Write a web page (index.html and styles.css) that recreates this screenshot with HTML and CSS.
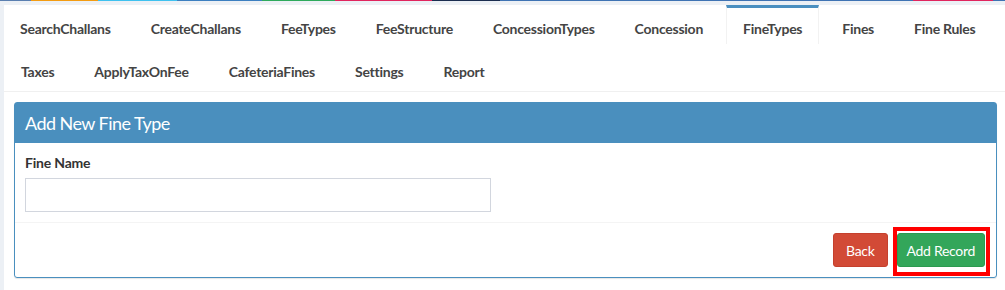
FILE: index.html
```html
<!DOCTYPE html>
<html lang="en">
<head>
  <meta charset="UTF-8">
  <title>Fine Types</title>
  <link rel="stylesheet" href="styles.css">
</head>
<body>
  <div class="color-strip">
    <span class="c1"></span><span class="c2"></span><span class="c3"></span><span class="c4"></span>
    <span class="c5"></span><span class="c6"></span><span class="c7"></span><span class="c8"></span>
    <span class="c9"></span><span class="c10"></span>
  </div>

  <div class="content">
    <ul class="nav-tabs">
      <li><a href="#">SearchChallans</a></li>
      <li><a href="#">CreateChallans</a></li>
      <li><a href="#">FeeTypes</a></li>
      <li><a href="#">FeeStructure</a></li>
      <li><a href="#">ConcessionTypes</a></li>
      <li><a href="#">Concession</a></li>
      <li class="active"><a href="#">FineTypes</a></li>
      <li><a href="#">Fines</a></li>
      <li><a href="#">Fine Rules</a></li>
      <li><a href="#">Taxes</a></li>
      <li><a href="#">ApplyTaxOnFee</a></li>
      <li><a href="#">CafeteriaFines</a></li>
      <li><a href="#">Settings</a></li>
      <li><a href="#">Report</a></li>
    </ul>

    <div class="box">
      <div class="box-header">
        <h3>Add New Fine Type</h3>
      </div>
      <div class="box-body">
        <label for="fineName">Fine Name</label>
        <input type="text" id="fineName">
      </div>
      <div class="box-footer">
        <button class="btn btn-danger">Back</button>
        <button class="btn btn-success">Add Record<span class="highlight"></span></button>
      </div>
    </div>
  </div>
</body>
</html>
```

FILE: styles.css
```css
body {
  margin: 0;
  background-color: #ecf0f5;
  font-family: Lato, "Open Sans", sans-serif;
  font-size: 14px;
  color: #333;
}

.color-strip {
  display: flex;
  height: 1px;
}

.color-strip span { display: block; }
.c1 { width: 31px; background-color: #5a7fb0; }
.c2 { width: 67px; background-color: #f39c12; }
.c3 { width: 79px; background-color: #3fc1ef; }
.c4 { width: 85px; background-color: #3c7fc0; }
.c5 { width: 73px; background-color: #2eaa5c; }
.c6 { width: 97px; background-color: #e0255e; }
.c7 { width: 68px; background-color: #1b2e50; }
.c8 { width: 413px; background-color: #3f73b3; }
.c9 { width: 80px; background-color: #e0255e; }
.c10 { flex: 1; background-color: #3f73b3; }

.content {
  margin: 4px 0 0 4px;
  background-color: #fff;
  padding-bottom: 12px;
}

.nav-tabs {
  list-style: none;
  margin: 0;
  padding: 0;
  display: flex;
  flex-wrap: wrap;
  border-bottom: 1px solid #f0f0f0;
}

.nav-tabs li {
  margin: 0 6px -1px 0;
}

.nav-tabs a {
  display: block;
  padding: 11px 16px 10px;
  line-height: 20px;
  border-top: 3px solid transparent;
  border-left: 1px solid transparent;
  border-right: 1px solid transparent;
  color: #444;
  font-weight: bold;
  letter-spacing: -0.25px;
  text-decoration: none;
}

.nav-tabs li:first-child a {
  border-left: none;
}

.nav-tabs .active a {
  border-top-color: #4a8fc0;
  border-left-color: #f2f2f2;
  border-right-color: #f2f2f2;
  padding-bottom: 5px;
  margin-bottom: 5px;
}

.box {
  margin: 10px 8px 0 10px;
  border: 1px solid #4a8fbe;
  border-radius: 3px;
  box-shadow: 0 1px 1px rgba(0, 0, 0, 0.1);
}

.box-header {
  background-color: #4a8fbe;
  color: #fff;
  padding: 10px;
}

.box-header h3 {
  margin: 0;
  font-size: 18px;
  font-weight: normal;
  line-height: 20px;
  letter-spacing: -0.55px;
}

.box-body {
  padding: 10px 10px 10px;
}

.box-body label {
  display: block;
  font-weight: bold;
  line-height: 20px;
  letter-spacing: -0.2px;
  margin-bottom: 5px;
}

.box-body input {
  display: block;
  box-sizing: border-box;
  width: 466px;
  height: 34px;
  margin-top: 1px;
  border: 1px solid #d2d6de;
  padding: 6px 12px;
  font-size: 14px;
}

.box-footer {
  border-top: 1px solid #f4f4f4;
  padding: 10px 11px 10px 10px;
  display: flex;
  justify-content: flex-end;
  gap: 9px;
}

.btn {
  height: 34px;
  padding: 6px 12px;
  border: 1px solid transparent;
  border-radius: 3px;
  color: #fff;
  font-family: Lato, "Open Sans", sans-serif;
  font-size: 14px;
  letter-spacing: -0.3px;
}

.btn-danger {
  background-color: #d24a36;
  border-color: #c5402d;
}

.btn-success {
  position: relative;
  padding: 6px 9px;
  background-color: #33a65a;
  border-color: #2c9a50;
}

/* red annotation frame round the button */
.highlight {
  position: absolute;
  left: -5px;
  top: -7px;
  right: -6px;
  bottom: -10px;
  border: 4px solid #ff0000;
}
```
